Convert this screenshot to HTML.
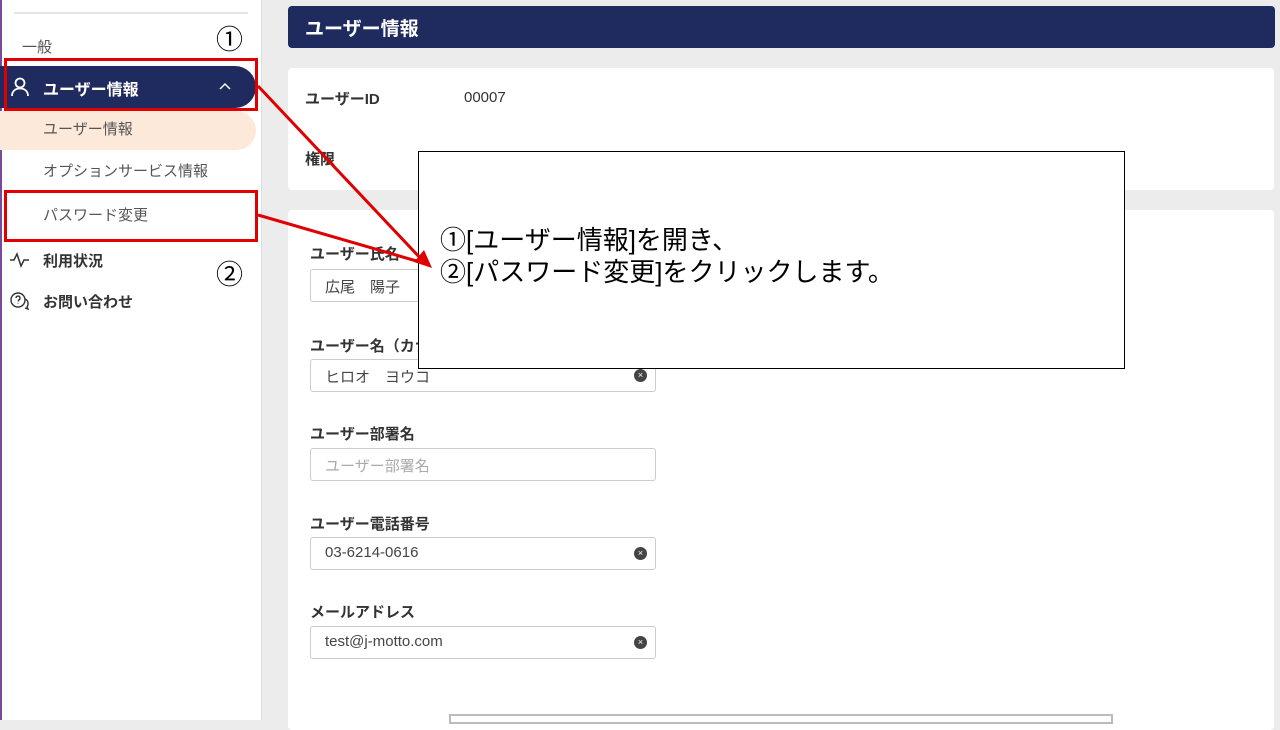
<!DOCTYPE html><html><head><meta charset="utf-8"><style>
*{margin:0;padding:0;box-sizing:border-box}
body{width:1280px;height:720px;overflow:hidden;background:#ececec;font-family:"Liberation Sans","Noto Sans CJK JP",sans-serif;position:relative;color:#333}
.sb{position:absolute;left:0;top:0;width:262px;height:720px;background:#fff;border-right:1px solid #ddd;border-left:2px solid #7a4a9a}
.abs{position:absolute}
.lbl{position:absolute;left:310px;font-size:15px;font-weight:bold;color:#333}
.inp{position:absolute;left:310px;width:346px;height:33px;border:1px solid #ccc;border-radius:3px;background:#fff;font-size:15px;padding:6px 14px;color:#444}
.x{position:absolute;right:8px;top:9px;width:13px;height:13px;border-radius:50%;background:#444;color:#fff;font-size:9px;line-height:13px;text-align:center}
</style></head><body>
<div class="sb"></div>
<div class="abs" style="left:14px;top:12px;width:234px;height:2px;background:#e6e6e6"></div>
<div class="abs" style="left:22px;top:36px;font-size:15px;color:#555">一般</div>
<div class="abs" style="left:216px;top:18px;font-size:27px;color:#000">①</div>
<div class="abs" style="left:0;top:66px;width:256px;height:42px;background:#1f2a5e;border-radius:0 21px 21px 0"></div>
<svg class="abs" style="left:9px;top:76px" width="22" height="22" viewBox="0 0 22 22" fill="none" stroke="#fff" stroke-width="1.8"><circle cx="11" cy="7" r="4.5"/><path d="M3 20c0-5 3.5-7.5 8-7.5s8 2.5 8 7.5"/></svg>
<div class="abs" style="left:43px;top:76px;font-size:16px;font-weight:bold;color:#fff">ユーザー情報</div>
<svg class="abs" style="left:218px;top:81px" width="14" height="10"><path d="M2 8l5-5 5 5" stroke="#fff" stroke-width="1.5" fill="none"/></svg>
<div class="abs" style="left:0;top:111px;width:256px;height:39px;background:#fde9d9;border-radius:0 20px 20px 0"></div>
<div class="abs" style="left:43px;top:118px;font-size:15px;color:#555">ユーザー情報</div>
<div class="abs" style="left:43px;top:160px;font-size:15px;color:#555">オプションサービス情報</div>
<div class="abs" style="left:43px;top:204px;font-size:15px;color:#555">パスワード変更</div>
<div class="abs" style="left:4px;top:58px;width:254px;height:53px;border:3px solid #e00000"></div>
<div class="abs" style="left:4px;top:190px;width:254px;height:52px;border:3px solid #e00000"></div>
<svg class="abs" style="left:9px;top:252px" width="22" height="16" fill="none" stroke="#333" stroke-width="1.5"><path d="M1 8h4l3-6 4 12 3-6h5"/></svg>
<div class="abs" style="left:43px;top:250px;font-size:15px;font-weight:bold">利用状況</div>
<div class="abs" style="left:216px;top:253px;font-size:27px;color:#000">②</div>
<svg class="abs" style="left:9px;top:291px" width="22" height="20" fill="none" stroke="#333" stroke-width="1.4"><circle cx="9" cy="9" r="7"/><path d="M7 7a2 2 0 1 1 2.5 2v1.5M9 12.5v.5"/><path d="M16 8c3 1 4 5 2 8l1 2-3-1"/></svg>
<div class="abs" style="left:43px;top:291px;font-size:15px;font-weight:bold">お問い合わせ</div>

<div class="abs" style="left:288px;top:6px;width:987px;height:42px;background:#1f2a5e;border-radius:4px"></div>
<div class="abs" style="left:305px;top:14px;font-size:19px;font-weight:bold;color:#fff">ユーザー情報</div>
<div class="abs" style="left:288px;top:68px;width:986px;height:122px;background:#fff;border-radius:4px"></div>
<div class="abs" style="left:305px;top:88px;font-size:15px;font-weight:bold">ユーザーID</div>
<div class="abs" style="left:464px;top:89px;font-size:15px">00007</div>
<div class="abs" style="left:305px;top:148px;font-size:15px;font-weight:bold">権限</div>
<div class="abs" style="left:288px;top:210px;width:986px;height:520px;background:#fff;border-radius:4px"></div>
<div class="lbl" style="top:243px">ユーザー氏名</div>
<div class="inp" style="top:269px">広尾　陽子</div>
<div class="lbl" style="top:335px">ユーザー名（カナ）</div>
<div class="inp" style="top:359px">ヒロオ　ヨウコ<span class="x">×</span></div>
<div class="lbl" style="top:423px">ユーザー部署名</div>
<div class="inp" style="top:448px;color:#aaa">ユーザー部署名</div>
<div class="lbl" style="top:513px">ユーザー電話番号</div>
<div class="inp" style="top:537px">03-6214-0616<span class="x">×</span></div>
<div class="lbl" style="top:601px">メールアドレス</div>
<div class="inp" style="top:626px">test@j-motto.com<span class="x">×</span></div>
<div class="abs" style="left:449px;top:714px;width:664px;height:10px;border:2px solid #bbb;background:#fff"></div>

<div class="abs" style="left:418px;top:151px;width:707px;height:218px;background:#fff;border:1.5px solid #000"></div>
<div class="abs" style="left:440px;top:224px;font-size:26px;line-height:32px;color:#000;white-space:nowrap">①[ユーザー情報]を開き、<br>②[パスワード変更]をクリックします。</div>
<svg class="abs" style="left:0;top:0" width="1280" height="720"><g stroke="#e00000" stroke-width="3" fill="#e00000"><line x1="258" y1="86" x2="424" y2="262"/><line x1="258" y1="215" x2="420" y2="262"/><polygon points="432,268 414,262 424,250" stroke="none"/></g></svg>
</body></html>
